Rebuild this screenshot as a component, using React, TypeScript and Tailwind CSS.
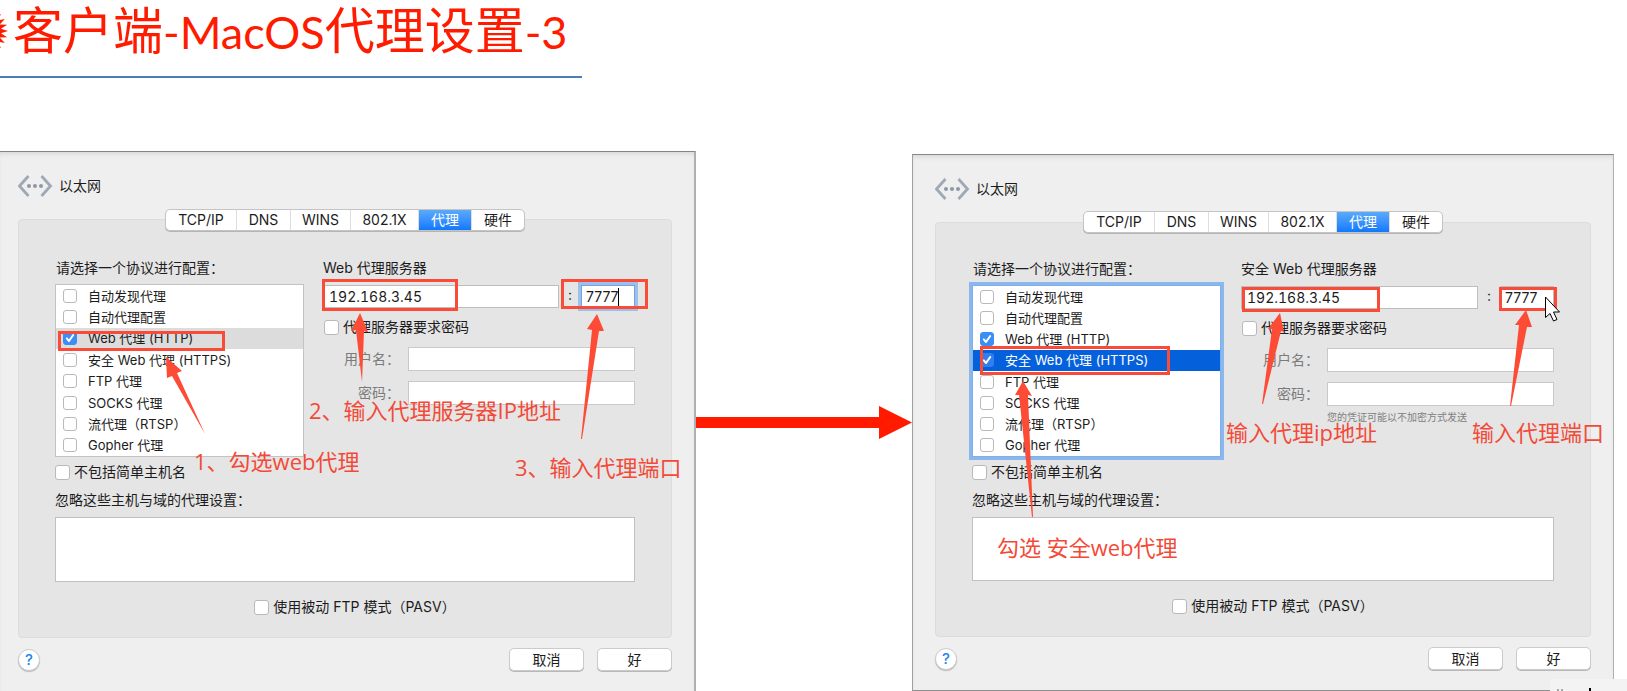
import { useId, type ReactNode } from "react";
import { clsx } from "clsx";

const PROTOCOLS = [
  "自动发现代理",
  "自动代理配置",
  "Web 代理 (HTTP)",
  "安全 Web 代理 (HTTPS)",
  "FTP 代理",
  "SOCKS 代理",
  "流代理（RTSP）",
  "Gopher 代理",
];

const TABS = [
  { name: "TCP/IP", width: "w-[71px]" },
  { name: "DNS", width: "w-[54px]" },
  { name: "WINS", width: "w-[60px]" },
  { name: "802.1X", width: "w-[68px]" },
  { name: "代理", width: "w-[53px]" },
  { name: "硬件", width: "w-[52px]" },
];

function CheckBox({
  label,
  small = false,
  checked = false,
  dimmed = false,
}: {
  label: string;
  small?: boolean;
  checked?: boolean;
  dimmed?: boolean;
}) {
  return (
    <label className={clsx("flex items-center", small ? "gap-[11px]" : "h-5 gap-1")}>
      <span className={clsx("relative grid shrink-0 place-items-center", small ? "size-[14px]" : "size-[15px]")}>
        <input
          type="checkbox"
          defaultChecked={checked}
          className={clsx(
            "peer size-full appearance-none rounded-[3px] border border-[#b9b9b9] bg-white",
            dimmed
              ? "checked:border-[#2f7fee] checked:bg-[#2f7fee]"
              : "checked:border-[#3b8ef5] checked:bg-[#3b8ef5]",
          )}
        />
        <svg
          viewBox="0 0 14 14"
          className="pointer-events-none absolute inset-0 hidden size-full peer-checked:block"
          fill="none"
          stroke="white"
          strokeWidth="2"
          strokeLinecap="round"
          strokeLinejoin="round"
        >
          <path d="M3.8 7.4 6 10l4.2-6" />
        </svg>
      </span>
      <span className="whitespace-nowrap">{label}</span>
    </label>
  );
}

function EthernetIcon() {
  return (
    <svg viewBox="0 0 35 22" className="h-[22px] w-[35px]" fill="none" aria-hidden="true">
      <path d="M10.5 1 1.5 11 10.5 21" stroke="#9fa9b6" strokeWidth="2.8" />
      <path d="M23.5 1 32.5 11 23.5 21" stroke="#9fa9b6" strokeWidth="2.8" />
      <circle cx="11" cy="11" r="2" fill="#8d98a7" />
      <circle cx="17" cy="11" r="2" fill="#8d98a7" />
      <circle cx="23" cy="11" r="2" fill="#8d98a7" />
    </svg>
  );
}

function Field({ label, type }: { label: string; type: string }) {
  const id = useId();
  return (
    <div className="flex items-center justify-end gap-2">
      <label htmlFor={id} className="whitespace-nowrap text-[#7b7b7b]">
        {label}
      </label>
      <input id={id} type={type} className="h-6 w-[227px] border border-[#c9c9c9] bg-white px-1 outline-none" />
    </div>
  );
}

function ProxyDialog({
  className,
  serverLabel,
  selected,
  checked,
  listFocused = false,
  hint,
  children,
}: {
  className: string;
  serverLabel: string;
  selected: number;
  checked: number[];
  listFocused?: boolean;
  hint?: string;
  children: ReactNode;
}) {
  const id = useId();
  return (
    <section
      className={clsx(
        "relative border-t border-t-[#858585] bg-[#efefef] pb-5 text-[14px] leading-5 text-[#1c1c1c] shadow-[inset_0_4px_4px_-2px_#d9d9d9]",
        className,
      )}
    >
      <header className="flex h-[67px] items-start pt-[23px]">
        <h2 className="flex h-[22px] items-center gap-[6px]">
          <EthernetIcon />
          以太网
        </h2>
      </header>

      <div className="rounded-[4px] border border-[#dcdcdc] bg-[#e5e5e5] px-9 pb-5">
        <nav className={clsx("flex justify-center", listFocused ? "-mt-3" : "-mt-[11px]")}>
          <div className="flex h-[22px] overflow-hidden rounded-[5px] border border-[#c4c4c4] bg-white shadow-[0_1px_0_#b5b5b5]">
            {TABS.map((tab) => (
              <button
                key={tab.name}
                type="button"
                className={clsx(
                  "h-full border-r border-[#dedede] leading-5 last:border-r-0",
                  tab.width,
                  tab.name === "代理" && "border-[#1a7cf5] bg-linear-to-b from-[#5aaafb] to-[#0f78fe] text-white",
                )}
              >
                {tab.name}
              </button>
            ))}
          </div>
        </nav>

        <div className={clsx("flex", listFocused ? "mt-[26px] gap-5" : "mt-[27px] gap-[19px]")}>
          <div className="w-[249px] shrink-0">
            <p className="pl-px">请选择一个协议进行配置：</p>
            <ul
              className={clsx(
                "mt-[6px] flex flex-col border bg-white text-[13px]",
                listFocused
                  ? "h-[172px] border-[#7fb0ec] shadow-[0_0_0_3px_#8ab7ee]"
                  : "h-[173px] border-[#c3c3c3]",
              )}
            >
              {PROTOCOLS.map((name, i) => (
                <li
                  key={name}
                  className={clsx(
                    "flex flex-1 items-center pl-[7px]",
                    i === selected && (listFocused ? "bg-[#0560dc] text-white" : "bg-[#dcdcdc]"),
                  )}
                >
                  <CheckBox
                    label={name}
                    small
                    checked={checked.includes(i)}
                    dimmed={listFocused && i === selected}
                  />
                </li>
              ))}
            </ul>
          </div>

          <div className="min-w-0 flex-1">
            <label htmlFor={`${id}-host`} className="block">
              {serverLabel}
            </label>
            <div className="mt-[7px] flex h-[23px] items-stretch">
              <input
                id={`${id}-host`}
                defaultValue="192.168.3.45"
                className="min-w-0 flex-1 border border-[#bdbdbd] bg-white pl-[5px] tabular-nums outline-none"
              />
              <span className="w-[22px] text-center">:</span>
              <span className="relative flex w-[54px]">
                <input
                  aria-label="端口"
                  defaultValue="7777"
                  className={clsx(
                    "w-full border bg-white pl-1 outline-none",
                    listFocused ? "border-[#bdbdbd]" : "border-[#6fa5e8] shadow-[0_0_0_3px_#9dbfea]",
                  )}
                />
                {!listFocused && <span className="absolute top-[3px] left-[37px] h-[18px] w-px bg-black" />}
              </span>
            </div>
            <div className="mt-[9px] pl-px">
              <CheckBox label="代理服务器要求密码" />
            </div>
            <div className="mt-[10px] flex flex-col gap-[10px]">
              <Field label="用户名：" type="text" />
              <Field label="密码：" type="password" />
            </div>
            {hint && (
              <p className="mt-1 flex justify-end text-[10px] leading-[14px] text-[#808080]">
                <span className="w-[227px]">{hint}</span>
              </p>
            )}
          </div>
        </div>

        <div className="mt-[5px]">
          <CheckBox label="不包括简单主机名" />
        </div>
        <label htmlFor={`${id}-skip`} className="mt-2 block">
          忽略这些主机与域的代理设置：
        </label>
        <textarea
          id={`${id}-skip`}
          className={clsx(
            "mt-[7px] block w-full resize-none border border-[#c0c0c0] bg-white outline-none",
            listFocused ? "h-16" : "h-[65px]",
          )}
        />
        <div className="mt-[15px] flex justify-center pl-5">
          <CheckBox label="使用被动 FTP 模式（PASV）" />
        </div>
      </div>

      <footer className="mt-[10px] flex items-center gap-[13px]">
        <button
          type="button"
          aria-label="帮助"
          className="mr-auto size-[22px] rounded-full border border-[#cdcdcd] bg-white text-[15px] leading-5 font-medium text-[#2187e8] shadow-[0_1px_1px_#b8b8b8]"
        >
          ?
        </button>
        {["取消", "好"].map((name) => (
          <button
            key={name}
            type="button"
            className="h-[23px] w-[75px] rounded-[5px] border border-[#cbcbcb] bg-white leading-5 shadow-[0_1px_0_#b8b8b8]"
          >
            {name}
          </button>
        ))}
      </footer>

      {children}
    </section>
  );
}

function Frame({ className }: { className: string }) {
  return <div className={clsx("pointer-events-none absolute border-[3px] border-[#f94b38]", className)} />;
}

function Note({ className, children }: { className: string; children: ReactNode }) {
  return (
    <p
      className={clsx(
        "pointer-events-none absolute font-['Open_Sans','Noto_Sans_CJK_SC',sans-serif] text-[22px] leading-7 whitespace-nowrap text-[#f34a38]",
        className,
      )}
    >
      {children}
    </p>
  );
}

function Pointers({ shapes, children }: { shapes: string[]; children?: ReactNode }) {
  return (
    <svg
      className="pointer-events-none absolute inset-0 size-full overflow-visible"
      fill="#fd4b35"
      aria-hidden="true"
    >
      {shapes.map((points) => (
        <polygon key={points} points={points} />
      ))}
      {children}
    </svg>
  );
}

// Spiked bullet whose centre lies left of the page edge.
const BURST = Array.from({ length: 48 }, (_, i) => {
  const r = i % 2 ? 17 : 24;
  const a = (i * Math.PI) / 24;
  return `${(-16 + r * Math.cos(a)).toFixed(1)},${(25 + r * Math.sin(a)).toFixed(1)}`;
}).join(" ");

export default function App() {
  return (
    <div className="relative overflow-hidden bg-white font-['Inter','Noto_Sans_CJK_SC',sans-serif]">
      <header className="flex h-[78px] w-[582px] items-start border-b-2 border-[#4f7db3] text-[#fe1b00]">
        <svg viewBox="0 0 8 50" className="mt-[6px] h-[50px] w-2" fill="currentColor" aria-hidden="true">
          <polygon points={BURST} />
        </svg>
        <h1 className="ml-[5px] font-['Noto_Sans_CJK_SC',sans-serif] text-[50px] leading-[54px] whitespace-nowrap">
          客户端
          <span className="font-['Lato',sans-serif] text-[45px]">-MacOS</span>
          代理设置
          <span className="font-['Lato',sans-serif] text-[45px]">-3</span>
        </h1>
      </header>

      <main className="mt-[73px] grid grid-cols-[696fr_216fr_702fr_13fr]">
        <ProxyDialog
          className="border-r-2 border-r-[#b0b0b0] pr-[22px] pl-[18px]"
          serverLabel="Web 代理服务器"
          selected={2}
          checked={[2]}
        >
          <Frame className="top-[179px] left-[58px] h-5 w-[167px]" />
          <Frame className="top-[127px] left-[322px] h-8 w-[136px]" />
          <Frame className="top-[127px] left-[561px] h-[30px] w-[87px]" />
          <Pointers
            shapes={[
              "166,205 182,219 177,221 205,282 172,224 167,226",
              "360,161 368,180 364,179 362,230 356,178 351,179",
              "597,162 604,179 599,179 582,287 581,287 592,178 587,177",
            ]}
          />
          <Note className="top-[295px] left-[194px]">1、勾选web代理</Note>
          <Note className="top-[244px] left-[309px]">2、输入代理服务器IP地址</Note>
          <Note className="top-[301px] left-[515px]">3、输入代理端口</Note>
        </ProxyDialog>

        <div className="mt-[255px] flex h-[33px] items-center text-[#ff1a00]">
          <div className="h-[11px] flex-1 bg-current" />
          <svg viewBox="0 0 33 33" className="size-[33px]" fill="currentColor" aria-hidden="true">
            <polygon points="0,0 33,16.5 0,33" />
          </svg>
        </div>

        <ProxyDialog
          className="mt-[3px] border-r border-b border-l border-r-[#b0b0b0] border-b-[#8f8f8f] border-l-[#a0a0a0] px-[22px]"
          serverLabel="安全 Web 代理服务器"
          selected={3}
          checked={[2, 3]}
          listFocused
          hint="您的凭证可能以不加密方式发送"
        >
          <Frame className="top-[191px] left-[67px] h-[29px] w-[190px]" />
          <Frame className="top-[132px] left-[329px] h-[25px] w-[138px]" />
          <Frame className="top-[132px] left-[586px] h-6 w-[58px]" />
          <Pointers
            shapes={[
              "110,226 119,241 115,240 120,362 119,362 106,240 102,240",
              "367,158 371,177 368,176 350,249 349,249 359,174 355,174",
              "613,155 619,172 614,172 598,251 597,251 606,170 602,170",
            ]}
          >
            <path
              d="M632.5 142v20.500l4.500-4 3.500 7.500 3.500-1.500-3.500-7.500h6z"
              fill="white"
              stroke="black"
              strokeWidth="1"
            />
          </Pointers>
          <Note className="top-[263px] left-[313px]">输入代理ip地址</Note>
          <Note className="top-[263px] left-[559px]">输入代理端口</Note>
          <Note className="top-[378px] left-[84px]">勾选 安全web代理</Note>
        </ProxyDialog>
      </main>

      <div className="absolute right-0 bottom-0 flex h-3 w-[77px] items-end gap-[2px] bg-[#f3f3f3] pl-[7px]">
        <span className="h-[2px] w-[2px] bg-[#a8a8a8]" />
        <span className="h-[2px] w-[2px] bg-[#a8a8a8]" />
        <span className="ml-[24px] h-[3px] w-[2px] bg-black" />
      </div>
    </div>
  );
}
